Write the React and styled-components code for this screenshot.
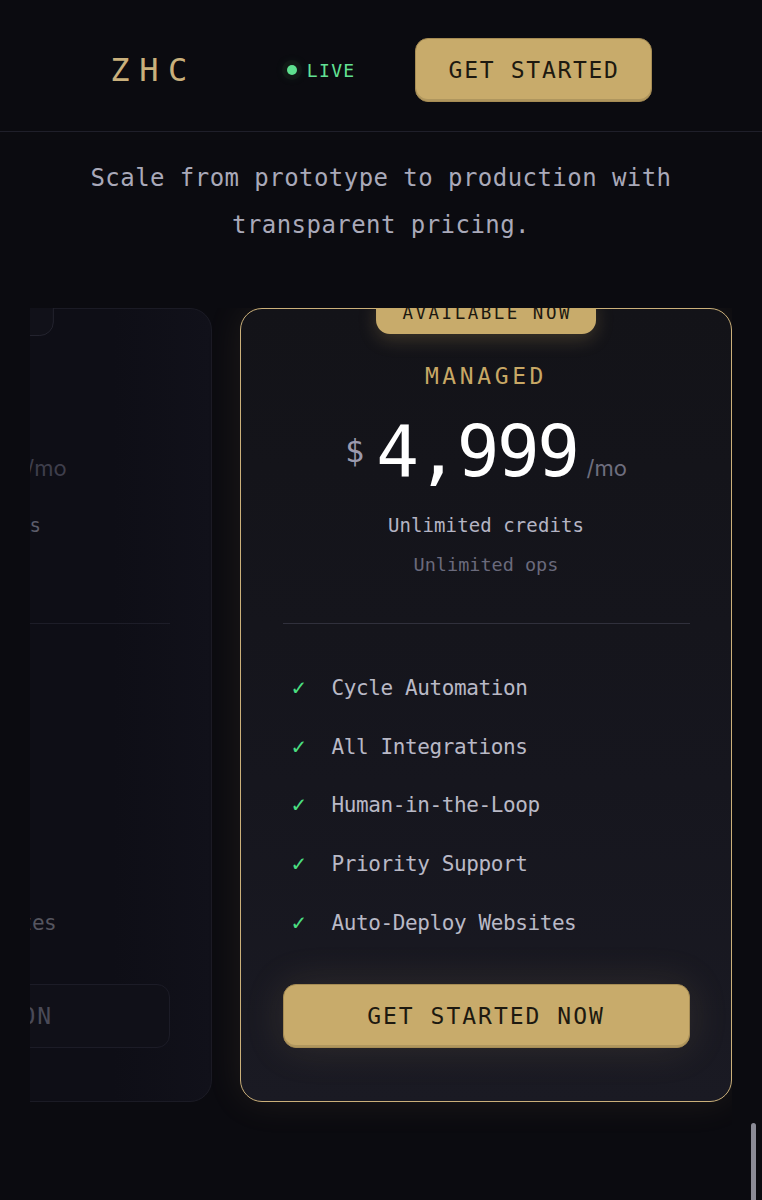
import React, { useLayoutEffect, useRef } from 'react';
import styled, { createGlobalStyle } from 'styled-components';

const mono = `"DejaVu Sans Mono", "Liberation Mono", monospace`;
const gold = '#c8ab6b';

const GlobalStyle = createGlobalStyle`
  html, body {
    margin: 0;
    padding: 0;
    background: #0b0b10;
    overflow: hidden;
  }
  * {
    box-sizing: border-box;
  }
`;

const Page = styled.div`
  min-height: 1200px;
  background: #0b0b10;
  font-family: ${mono};
`;

const Header = styled.header`
  height: 132px;
  border-bottom: 1px solid #1f1f2a;
  display: flex;
  align-items: center;
  justify-content: center;
  padding-top: 9px;
`;

const Logo = styled.div`
  font-size: 32px;
  letter-spacing: 9.5px;
  color: #c9b07c;
  margin-right: 90px;
`;

const Live = styled.div`
  display: flex;
  align-items: center;
  gap: 10px;
  margin-right: 59px;
`;

const LiveDot = styled.span`
  width: 10px;
  height: 10px;
  border-radius: 50%;
  background: #5ee08f;
  box-shadow: 0 0 0 5px rgba(20, 30, 24, 0.6), 0 0 12px rgba(94, 224, 143, 0.25);
`;

const LiveText = styled.span`
  font-size: 18px;
  letter-spacing: 1.4px;
  color: #62e294;
`;

const GoldButton = styled.button`
  font-family: ${mono};
  background: ${gold};
  color: #1d1910;
  border: 1.5px solid #a68c54;
  border-radius: 13px;
  height: 64px;
  cursor: pointer;
  box-shadow: inset 0 -2px 0 rgba(0, 0, 0, 0.12);
`;

const HeaderButton = styled(GoldButton)`
  font-size: 23px;
  letter-spacing: 1.7px;
  padding: 0 31px 0 33px;
`;

const Subtitle = styled.p`
  margin: 23px auto 0;
  max-width: 620px;
  text-align: center;
  font-size: 24px;
  letter-spacing: 0.45px;
  line-height: 47px;
  color: #a9a9b9;
`;

const Carousel = styled.div`
  margin: 59px 30px 0;
  overflow-x: auto;
  scrollbar-width: none;
  padding-bottom: 40px;
  &::-webkit-scrollbar {
    display: none;
  }
`;

const Track = styled.div`
  display: flex;
  gap: 28px;
  width: max-content;
`;

const Card = styled.div`
  position: relative;
  flex: 0 0 492px;
  height: 794px;
  display: flex;
  flex-direction: column;
  align-items: center;
  padding: 54px 41.5px 50px;
  border-radius: 22px;
  border: ${p => (p.$featured ? '1.5px solid #cbb07a' : '1.5px solid #1b1b25')};
  background: ${p =>
    p.$featured
      ? 'linear-gradient(180deg, #131318 0%, #16161e 60%, #1a1a23 100%)'
      : 'linear-gradient(90deg, #0e0e16 0%, #0e0e16 80%, #11111a 100%)'};
  box-shadow: ${p => (p.$featured ? '0 0 36px rgba(203, 170, 110, 0.1)' : 'none')};
`;

const Badge = styled.div`
  position: absolute;
  top: -11.5px;
  left: 50%;
  transform: translateX(-50%);
  white-space: nowrap;
  font-size: 17.5px;
  line-height: 1;
  letter-spacing: 2.5px;
  padding: ${p => (p.$featured ? '7px 24px 11.5px 26.5px' : '7px 35px 11.5px')};
  border-radius: 0 0 14px 14px;
  background: ${p => (p.$featured ? gold : '#111119')};
  color: ${p => (p.$featured ? '#1c1810' : '#55555f')};
  border: ${p => (p.$featured ? 'none' : '1px solid #23232e')};
  box-shadow: ${p => (p.$featured ? '0 6px 18px rgba(200, 170, 100, 0.22)' : 'none')};
`;

const PlanName = styled.div`
  font-size: 23px;
  line-height: 27.6px;
  letter-spacing: 3.6px;
  color: ${p => (p.$featured ? '#c8a865' : '#6a6a78')};
`;

const PriceRow = styled.div`
  display: flex;
  align-items: baseline;
  margin-top: 25px;
`;

const Currency = styled.span`
  align-self: center;
  font-size: 32px;
  line-height: 1;
  color: ${p => (p.$featured ? '#9a9aae' : '#4a4a58')};
  margin-right: 12px;
`;

const Amount = styled.span`
  font-size: 71px;
  line-height: 1;
  letter-spacing: -2.5px;
  color: ${p => (p.$featured ? '#ffffff' : '#6a6a78')};
`;

const Period = styled.span`
  font-family: Inter, "Liberation Sans", sans-serif;
  font-size: 22px;
  color: ${p => (p.$featured ? '#6e6e7e' : '#3e3e4c')};
  margin-left: 9px;
`;

const Credits = styled.div`
  margin-top: 26.5px;
  font-size: 19px;
  line-height: 24.7px;
  letter-spacing: 0.1px;
  color: ${p => (p.$featured ? '#b4b4c4' : '#5c5c6a')};
`;

const Ops = styled.div`
  margin-top: 15px;
  font-size: 18.5px;
  line-height: 24px;
  color: ${p => (p.$featured ? '#6a6a7c' : '#44444f')};
`;

const Divider = styled.hr`
  align-self: stretch;
  margin: 46.5px 0 0;
  border: none;
  height: 1px;
  background: ${p => (p.$featured ? '#30303c' : '#1d1d28')};
`;

const FeatureList = styled.ul`
  align-self: stretch;
  list-style: none;
  margin: 49.5px 0 0;
  padding: 0 0 0 8px;
  display: flex;
  flex-direction: column;
  gap: 30.75px;
`;

const Feature = styled.li`
  display: flex;
  align-items: center;
  height: 28px;
`;

const Check = styled.span`
  width: 41px;
  font-family: "DejaVu Sans", sans-serif;
  font-size: 20px;
  color: ${p => (p.$featured ? '#4ade80' : '#2d5c40')};
`;

const FeatureText = styled.span`
  font-size: 21px;
  letter-spacing: -0.4px;
  color: ${p => (p.$featured ? '#b9b9c6' : '#55555f')};
`;

const CardButton = styled(GoldButton)`
  align-self: stretch;
  margin-top: 47.5px;
  font-size: 23px;
  letter-spacing: 2px;
  ${p =>
    p.$featured
      ? 'box-shadow: inset 0 -2px 0 rgba(0, 0, 0, 0.12), 0 0 40px rgba(200, 170, 110, 0.14);'
      : 'background: #101018; border-color: #1c1c27; color: #4a4a57; box-shadow: none;'}
`;

const ScrollThumb = styled.div`
  position: fixed;
  right: 6px;
  top: 1123px;
  width: 5px;
  height: 90px;
  border-radius: 3px;
  background: #8b8b96;
`;

const features = [
  'Cycle Automation',
  'All Integrations',
  'Human-in-the-Loop',
  'Priority Support',
  'Auto-Deploy Websites',
];

const plans = [
  {
    name: 'STARTER',
    badge: 'WAITLIST',
    price: '999',
    credits: '5,000 credits',
    ops: '1,000 ops',
    cta: 'COMING SOON',
    featured: false,
  },
  {
    name: 'MANAGED',
    badge: 'AVAILABLE NOW',
    price: '4,999',
    credits: 'Unlimited credits',
    ops: 'Unlimited ops',
    cta: 'GET STARTED NOW',
    featured: true,
  },
];

const PlanCard = ({ plan }) => {
  const f = plan.featured;
  return (
    <Card $featured={f}>
      <Badge $featured={f}>{plan.badge}</Badge>
      <PlanName $featured={f}>{plan.name}</PlanName>
      <PriceRow>
        <Currency $featured={f}>$</Currency>
        <Amount $featured={f}>{plan.price}</Amount>
        <Period $featured={f}>/mo</Period>
      </PriceRow>
      <Credits $featured={f}>{plan.credits}</Credits>
      <Ops $featured={f}>{plan.ops}</Ops>
      <Divider $featured={f} />
      <FeatureList>
        {features.map(item => (
          <Feature key={item}>
            <Check $featured={f}>✓</Check>
            <FeatureText $featured={f}>{item}</FeatureText>
          </Feature>
        ))}
      </FeatureList>
      <CardButton $featured={f}>{plan.cta}</CardButton>
    </Card>
  );
};

const App = () => {
  const carouselRef = useRef(null);

  // 추천 플랜이 보이도록 캐러셀을 끝까지 스크롤
  useLayoutEffect(() => {
    const el = carouselRef.current;
    if (el) el.scrollLeft = el.scrollWidth - el.clientWidth;
  }, []);

  return (
    <>
      <GlobalStyle />
      <Page>
        <Header>
          <Logo>ZHC</Logo>
          <Live>
            <LiveDot />
            <LiveText>LIVE</LiveText>
          </Live>
          <HeaderButton>GET STARTED</HeaderButton>
        </Header>
        <Subtitle>Scale from prototype to production with transparent pricing.</Subtitle>
        <Carousel ref={carouselRef}>
          <Track>
            {plans.map(plan => (
              <PlanCard key={plan.name} plan={plan} />
            ))}
          </Track>
        </Carousel>
      </Page>
      <ScrollThumb />
    </>
  );
};

export default App;
